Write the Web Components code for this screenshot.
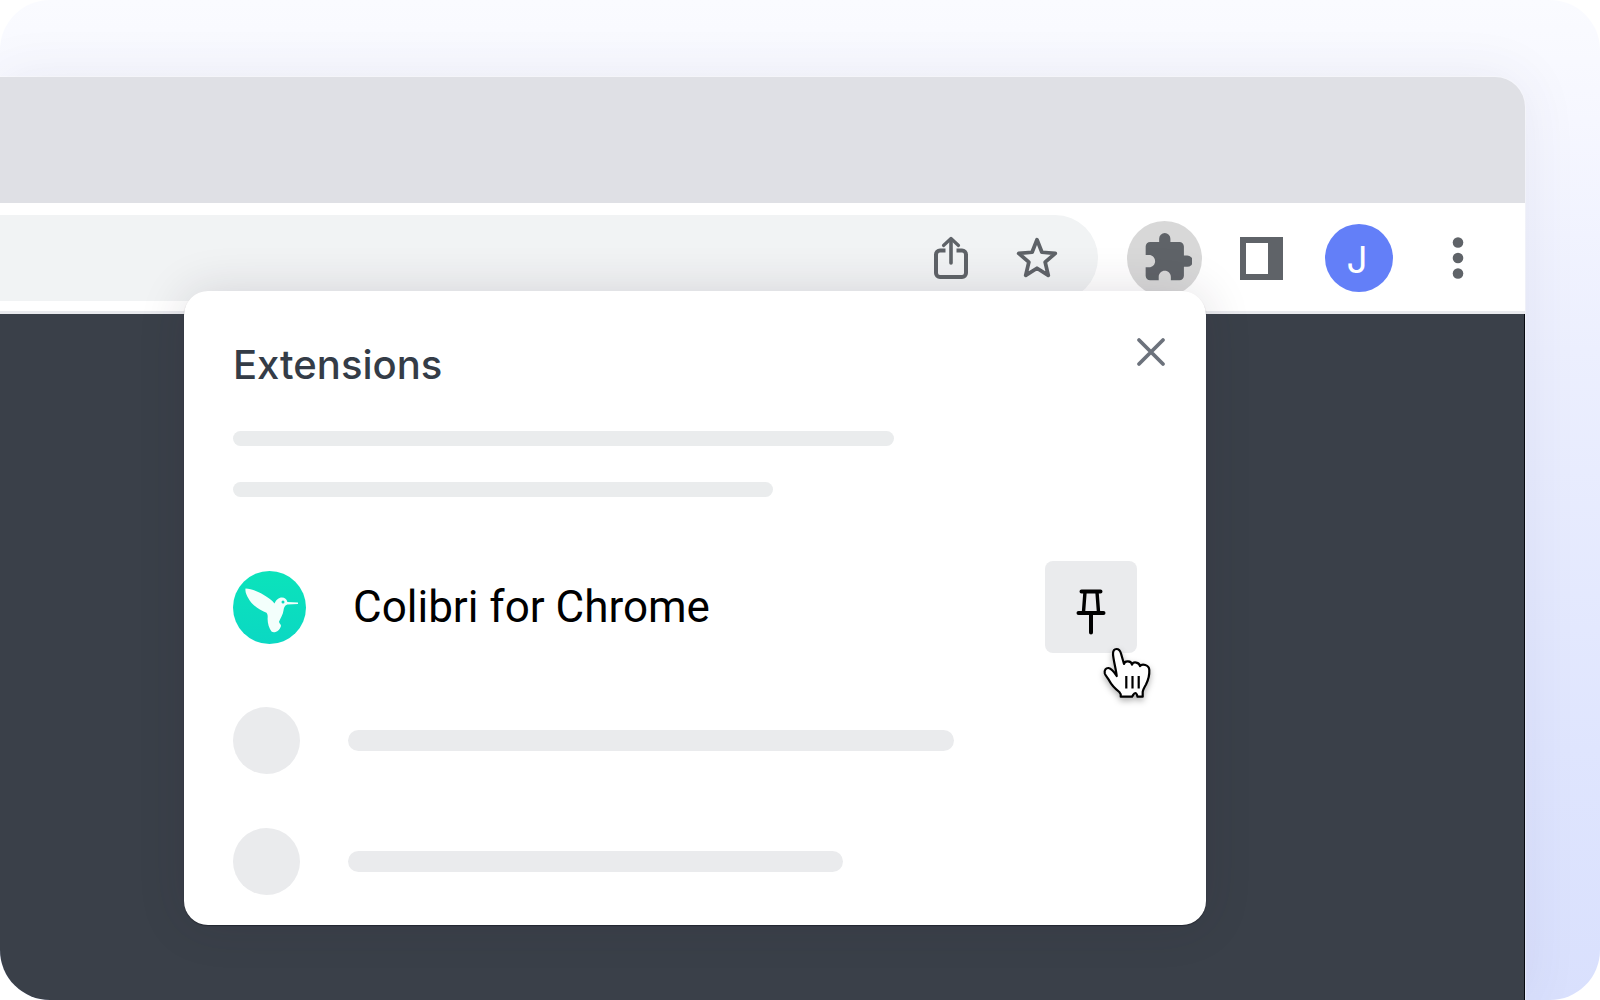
<!DOCTYPE html>
<html lang="en">
<head>
<meta charset="utf-8">
<title>Pin the extension</title>
<style>
body{margin:0;background:#fff;font-family:Inter,"Liberation Sans",sans-serif}
</style>
</head>
<body>
<demo-stage>
  <browser-window>
    <browser-toolbar slot="toolbar"></browser-toolbar>
    <extensions-popup slot="popup" heading="Extensions">
      <extension-row name="Colibri for Chrome"></extension-row>
      <placeholder-row style="--bar:606px"></placeholder-row>
      <placeholder-row style="--bar:495px"></placeholder-row>
    </extensions-popup>
  </browser-window>
</demo-stage>
<script>
function define(name, html) {
  const template = document.createElement('template');
  template.innerHTML = html;
  customElements.define(name, class extends HTMLElement {
    connectedCallback() {
      if (this.shadowRoot) return;
      const root = this.attachShadow({ mode: 'open' });
      root.append(template.content.cloneNode(true));
      root.querySelectorAll('[data-text]').forEach(el => {
        el.textContent = this.getAttribute(el.dataset.text);
      });
    }
  });
}

const base = `*{box-sizing:border-box}
button{border:0;padding:0;background:none;font:inherit;color:inherit;display:flex;align-items:center;justify-content:center;cursor:pointer;flex:none}
svg{display:block}`;

define('demo-stage', `<style>${base}
:host{display:flex;box-sizing:border-box;height:100vh;padding:77px 75px 0 0;overflow:hidden;border-radius:50px;
background:linear-gradient(180deg,#fafbff 0%,#f6f7ff 12%,#eceffe 35%,#dfe5fe 75%,#d9e0fd 100%)}
</style><slot></slot>`);

define('browser-window', `<style>${base}
:host{position:relative;display:flex;flex-direction:column;flex:1;border-radius:0 30px 0 0;box-shadow:0 0 56px rgba(60,60,100,.08),0 0 1px 1px rgba(255,255,255,.5)}
.tabs{height:126px;background:#dfe0e5;border-radius:0 30px 0 0}
.page{flex:1;background:#3a4049;border-right:1px solid #05080f}
.popup{position:absolute;top:214px;right:319px}
</style><div class="tabs"></div><slot name="toolbar"></slot><div class="page"></div><div class="popup"><slot name="popup"></slot></div>`);

define('browser-toolbar', `<style>${base}
:host{display:flex;align-items:center;gap:29px;height:111px;box-sizing:border-box;padding:2px 35px 0 0;background:#fff;border-bottom:3px solid #e9eaee;color:#5f6368}
.omnibox{flex:1;display:flex;align-items:center;gap:30px;height:86px;padding-right:33px;background:#f1f3f4;border-radius:0 43px 43px 0}
input{flex:1;min-width:0;height:56px;border:0;background:none;outline:0;font-size:32px}
.tool{width:56px;height:56px}
.ext{width:75px;height:75px;border-radius:50%;background:#d8d8d8}
.panel{width:61px;height:61px}
.account{width:76px;height:76px}
.account span{width:68px;height:68px;border-radius:50%;background:#637ff8;color:#fff;font-size:37px;line-height:72px;text-align:center;padding-right:4px}
.more{width:64px;height:64px}
</style>
<div class="omnibox">
<input type="text" aria-label="Address">
<button class="tool" aria-label="Share"><svg width="36" height="44" viewBox="0 0 36 44" fill="none" stroke="currentColor" stroke-width="4"><path d="M12.500 14.500H7a4 4 0 0 0-4 4V37a4 4 0 0 0 4 4h22a4 4 0 0 0 4-4V18.500a4 4 0 0 0-4-4h-5.500"/><path d="M18 27V3.500" stroke-width="3.600" stroke-linecap="round"/><path d="M10.500 9.500 18 2.500l7.500 7" stroke-width="3.200" stroke-linecap="round" stroke-linejoin="round"/></svg></button>
<button class="tool" aria-label="Bookmark"><svg width="46" height="46" viewBox="0 0 44 44" fill="none" stroke="currentColor" stroke-width="3.600" stroke-linejoin="round"><path d="M22 4.500 26.700 16.500l12.800 1.100-9.700 8.300 3 12.700L22 31.800l-10.800 6.800 3-12.700-9.700-8.300L17.300 16.500Z"/></svg></button>
</div>
<button class="ext" aria-label="Extensions"><svg width="54" height="54" viewBox="-1.400 0.100 24 24" fill="currentColor"><path d="M20.500 11H19V7c0-1.100-.9-2-2-2h-4V3.500a2.500 2.500 0 0 0-5 0V5H4c-1.100 0-1.990.9-1.990 2v3.800H3.500c1.490 0 2.700 1.210 2.700 2.700s-1.210 2.700-2.700 2.700H2V20c0 1.100.9 2 2 2h3.800v-1.500c0-1.490 1.210-2.700 2.700-2.700 1.490 0 2.700 1.210 2.700 2.700V22H17c1.100 0 2-.9 2-2v-4h1.500a2.500 2.500 0 0 0 0-5z"/></svg></button>
<button class="panel" aria-label="Side panel"><svg width="43" height="43" viewBox="0 0 43 43"><path fill="currentColor" fill-rule="evenodd" d="M0 0h43v43H0ZM6 6v31h22V6Z"/></svg></button>
<button class="account" aria-label="Account"><span>J</span></button>
<button class="more" aria-label="Menu"><svg width="12" height="44" viewBox="0 0 12 44" fill="currentColor"><circle cx="6" cy="6.500" r="5.300"/><circle cx="6" cy="22" r="5.300"/><circle cx="6" cy="37.500" r="5.300"/></svg></button>`);

define('extensions-popup', `<style>${base}
:host{display:block;width:1022px;box-sizing:border-box;padding:39px 0 30px;background:#fff;border-radius:24px;box-shadow:0 1px 1px #05080f66,0 0 48px rgba(40,30,50,.14)}
header{display:flex;justify-content:space-between;align-items:flex-start;padding:0 33px 0 49px}
h2{margin:11px 0 0;font-size:40px;line-height:48px;font-weight:500;color:#343c47}
header button{width:44px;height:44px;color:#6c727c}
.lines{display:flex;flex-direction:column;gap:36px;padding:42px 49px 64px}
.lines i{height:15px;border-radius:8px;background:#eaeced;width:661px}
.lines i+i{width:540px}
.rows{display:flex;flex-direction:column;gap:54px;padding:0 69px 0 49px}
</style>
<header><h2 data-text="heading"></h2><button aria-label="Close"><svg width="30" height="30" viewBox="0 0 30 30" stroke="currentColor" stroke-width="3.800" stroke-linecap="round"><path d="m3 3 24 24M27 3 3 27"/></svg></button></header>
<div class="lines"><i></i><i></i></div>
<div class="rows"><slot></slot></div>`);

define('extension-row', `<style>${base}
:host{display:flex;align-items:center;gap:47px;height:92px;color:#000}
.name{flex:1;font:400 44px/52px Roboto,"Liberation Sans",sans-serif}
.pin{position:relative;width:92px;height:92px;padding-top:10px;border-radius:8px;background:#eaebed}
.cursor{position:absolute;left:56px;top:84px;filter:drop-shadow(0 3px 3px rgba(0,0,0,.3))}
</style>
<svg width="73" height="73" viewBox="0 0 73 73"><defs><linearGradient id="g" x2="0" y2="1"><stop stop-color="#0be3bb"/><stop offset="1" stop-color="#0bd8c3"/></linearGradient></defs><circle cx="36.500" cy="36.500" r="36.500" fill="url(#g)"/><path fill="#f3fffc" d="M12.500 17.500C18 17.500 25 20.500 30 23.500c5 3 9.500 6 11.500 9 1.500-3.500 4-6 7.500-6 2.700 0 4.700 1.800 5.400 4.400L65 31.500v1.400l-10.800.5c-2.700 1.200-3.400 3.400-3.700 6-.5 4-3 7.600-4.500 11.400.3 1.800 2 2.500 2 4.200-1 3-3 5.500-5.500 6-1.500.4-3 .3-4-.5-2.800-4-4.300-9.500-3.800-14.500 0-2-.2-3-1.200-4.300C26 39 18.500 33.500 15.500 27.500c-1.800-3.500-3.500-6-3-10Z"/><circle cx="50" cy="31" r="1.500" fill="#0bdcc0"/></svg>
<span class="name" data-text="name"></span>
<button class="pin" aria-label="Pin extension"><svg width="30" height="46" viewBox="0 0 30 46" fill="none" stroke="#000" stroke-width="4" stroke-linecap="round"><path d="M5.500 2.500h19M2.500 24h25M15 24v19.500"/><path d="M9 3 7.500 23M21 3l1.500 20" stroke-width="3.400"/></svg>
<svg class="cursor" width="52" height="56" viewBox="0 0 52 56"><path fill="#fff" stroke="#000" stroke-width="2.200" stroke-linejoin="round" d="M15.700 31C15 24 12.300 15 12 9c0-3 1.500-5 3.500-5 2.500 0 3.800 2 4.500 4.500l3 10.500c.5-3.500 7.500-3.500 8 .7 1-3.500 7.500-2.700 8 1.500 2-2.800 9-1.500 9.300 3.800.3 5-.8 9.500-3.300 14.500-1.500 2.500-3 5-3.300 7.500v4.700H36.500c-.3-1.500-1-3.700-2.300-3.700-1.500 0-2 2.200-3.200 3.700H19.700c.5-2-.2-3.500-1.400-4.700-5-4-8-7.500-9.800-11-1.500-3-4-5-4.700-7.500-.8-3.500 1.200-5.700 3.700-5.500 3.500.7 5.700 4 8.200 8Z"/><path stroke="#000" stroke-width="2.200" d="M25.300 31v12.500M31.500 31v12.500M37.700 31v12.500"/></svg></button>`);

define('placeholder-row', `<style>${base}
:host{display:flex;align-items:center;gap:48px;height:67px}
b{width:67px;height:67px;border-radius:50%;background:#eaebed}
i{width:var(--bar);height:21px;border-radius:11px;background:#eaebed}
</style><b></b><i></i>`);
</script>
</body>
</html>
